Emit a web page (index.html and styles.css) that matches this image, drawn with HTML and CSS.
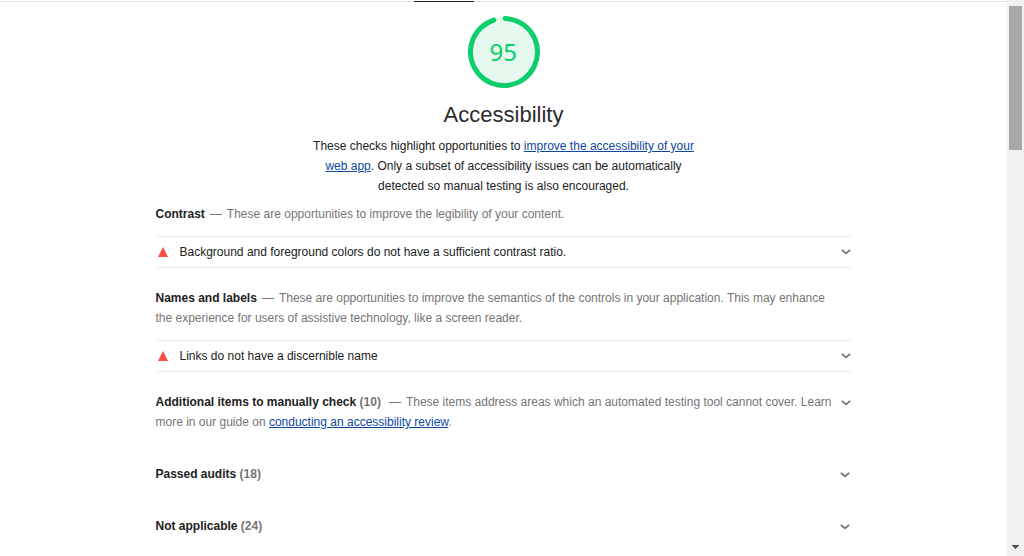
FILE: index.html
```html
<!DOCTYPE html>
<html lang="en">
<head>
<meta charset="utf-8">
<title>Accessibility report</title>
<link rel="stylesheet" href="styles.css">
</head>
<body>
<svg width="0" height="0" class="defs"><symbol id="chevron" viewBox="0 0 12 8"><path d="M1.8 1.9 6 5.5 10.2 1.9" fill="none" stroke="#707070" stroke-width="1.7"/></symbol></svg>
<div class="window">
  <main class="report">
    <div class="topbar"><span class="topbar-active"></span></div>
    <header class="score">
      <svg class="gauge" width="72" height="72" viewBox="0 0 72 72">
        <circle cx="36" cy="36" r="36" fill="#e6f9ef"/>
        <path d="M37.2 2.52A33.5 33.5 0 1 1 25.8 4.09" fill="none" stroke="#0cce6b" stroke-width="5" stroke-linecap="round"/>
        <text x="35.3" y="45" text-anchor="middle" class="gauge-value">95</text>
      </svg>
      <h1>Accessibility</h1>
      <p class="intro">These checks highlight opportunities to <a>improve the accessibility of your</a><br><a>web app</a>. Only a subset of accessibility issues can be automatically<br>detected so manual testing is also encouraged.</p>
    </header>
    <section class="group">
      <p class="desc"><b>Contrast</b><span class="dash">—</span>These are opportunities to improve the legibility of your content.</p>
      <div class="audit"><i class="triangle"></i><span>Background and foreground colors do not have a sufficient contrast ratio.</span><svg class="chevron"><use href="#chevron"/></svg></div>
    </section>
    <section class="group">
      <p class="desc"><b>Names and labels</b><span class="dash">—</span>These are opportunities to improve the semantics of the controls in your application. This may enhance<br>the experience for users of assistive technology, like a screen reader.</p>
      <div class="audit"><i class="triangle"></i><span>Links do not have a discernible name</span><svg class="chevron"><use href="#chevron"/></svg></div>
    </section>
    <section class="clump manual">
      <p class="desc"><b>Additional items to manually check <em>(10)</em></b><span class="dash wide">—</span>These items address areas which an automated testing tool cannot cover. Learn<br>more in our guide on <a>conducting an accessibility review</a>.</p>
      <svg class="chevron"><use href="#chevron"/></svg>
    </section>
    <section class="clump"><b>Passed audits <em>(18)</em></b><svg class="chevron"><use href="#chevron"/></svg></section>
    <section class="clump"><b>Not applicable <em>(24)</em></b><svg class="chevron"><use href="#chevron"/></svg></section>
  </main>
  <aside class="scrollbar">
    <div class="thumb"></div>
    <svg class="arrow" width="7" height="4" viewBox="0 0 7 4" shape-rendering="crispEdges"><path d="M0 0h7v1H6v1H5v1H4v1H3V3H2V2H1V1H0z" fill="#505050"/></svg>
  </aside>
</div>
</body>
</html>
```
FILE: styles.css
```css
* { box-sizing: border-box; }
body { margin: 0; background: #fff; color: #212121; font: 12px/20px "Liberation Sans", Arial, sans-serif; overflow: hidden; }
.defs { display: block; }
.window { display: flex; height: 556px; }
.report { flex: 1; }
.topbar { height: 2px; display: flex; padding-left: 414px; background: linear-gradient(#fff 1px, #e0e0e0 1px); }
.topbar-active { width: 60px; height: 2px; background: linear-gradient(#fff 1px, #212121 1px); }
.score { display: flex; flex-direction: column; align-items: center; padding-top: 14px; }
.gauge { display: block; }
.gauge-value { font: 24px "Noto Sans", sans-serif; fill: #0cce6b; }
h1 { margin: 10px 0 0; font-size: 22px; font-weight: 400; line-height: 34px; color: #2c2c2c; }
.intro { margin: 4px 0 0; text-align: center; white-space: nowrap; }
p { margin: 0; }
a { color: #0d47a1; text-decoration: underline; }
b { font-weight: 700; }
.group, .clump { width: 696px; margin-left: 155.5px; white-space: nowrap; }
.group { margin-top: 8px; }
.group + .group { margin-top: 20px; }
.desc { color: #757575; }
.desc b { color: #212121; }
.dash { margin: 0 5px; }
.dash.wide { margin-left: 8px; }
.audit { display: flex; align-items: center; height: 32px; margin-top: 12px; border: solid #ebebeb; border-width: 1px 0; padding: 0 0 0 2.5px; }
.triangle { width: 10px; height: 10px; margin-right: 11.5px; background: #ff4e42; clip-path: polygon(50% 0, 100% 100%, 0 100%); }
.chevron { width: 12px; height: 8px; flex: none; margin-left: auto; }
.audit .chevron { margin-right: -0.5px; }
.clump { display: flex; align-items: center; height: 20px; margin-top: 32px; }
.clump .chevron { margin: 1px 0.5px 0 auto; }
.clump em { font-style: normal; color: #757575; }
.clump.manual { height: 40px; align-items: flex-start; margin-top: 20px; }
.manual .chevron { margin: 7px -0.5px 0 auto; }
.scrollbar { width: 17px; background: #f1f1f1; display: flex; flex-direction: column; align-items: center; justify-content: space-between; padding: 6px 0 7px; }
.thumb { width: 13px; height: 144px; background: #a8a8a8; }
```
